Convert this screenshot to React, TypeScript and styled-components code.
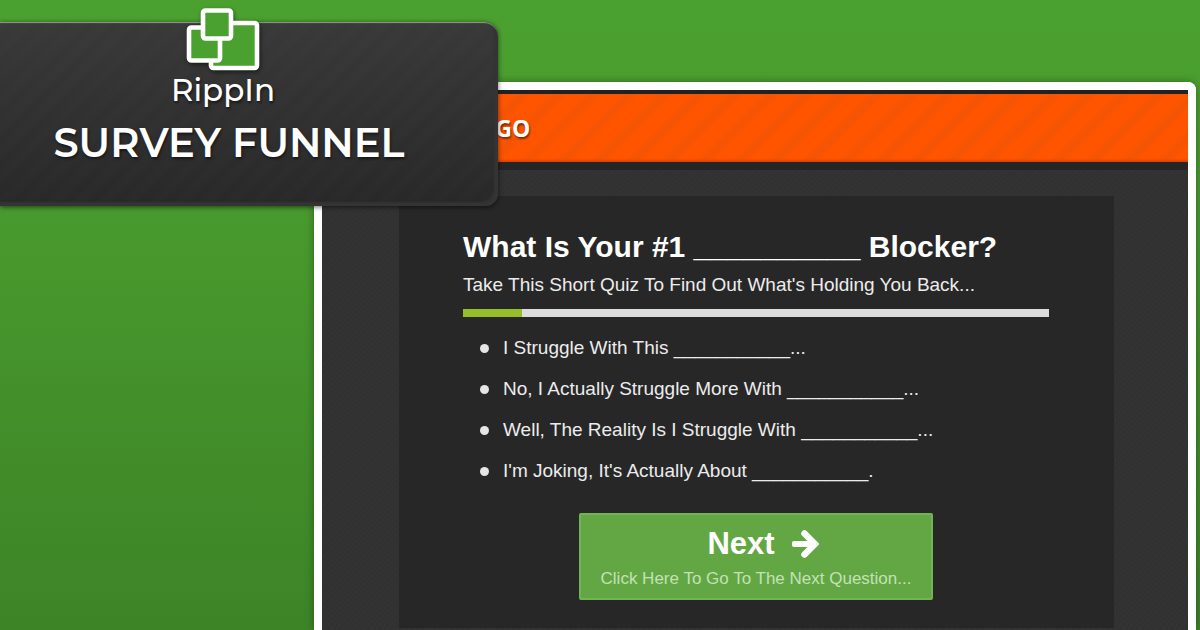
import React from "react";
import styled, { createGlobalStyle } from "styled-components";

const GlobalStyle = createGlobalStyle`
  *, *::before, *::after { box-sizing: border-box; }
  body { margin: 0; background: #3d8427; }
  h1, h2, p, ul { margin: 0; padding: 0; font-weight: inherit; }
`;

const Page = styled.main`
  position: relative;
  display: flex;
  min-height: 100vh;
  padding: 82px 4px 0 314px;
  overflow: hidden;
  background: linear-gradient(#4ba12f, #499b2e 30%, #3d8427);
  font-family: "Liberation Sans", Arial, sans-serif;
`;

const Frame = styled.section`
  flex: 1;
  display: flex;
  flex-direction: column;
  border: 8px solid #fff;
  border-bottom: 0;
  border-radius: 8px 8px 0 0;
  background: repeating-linear-gradient(135deg, #313131 0 2px, #333 2px 4px);
  box-shadow: 0 0 8px rgba(0, 0, 0, 0.35);
`;

const TopBar = styled.header`
  display: flex;
  align-items: center;
  height: 80px;
  padding-left: 142px;
  border-top: 4px solid #222;
  border-bottom: 8px solid #252525;
  background: repeating-linear-gradient(135deg, #ff5500 0 10px, #f45404 17px 19px, #ff5500 25px);
  box-shadow: inset 0 -3px 2px -1px #e24306;
`;

const SiteName = styled.a`
  color: #fff;
  font: 700 23px/32px "Open Sans", sans-serif;
  text-decoration: none;
  text-shadow: 1px 2px 2px rgba(0, 0, 0, 0.5);
`;

const Quiz = styled.form`
  display: flex;
  flex-direction: column;
  margin: 26px 74px 2px 77px;
  padding: 33px 65px 28px 64px;
  background: #272727;
  color: #ececec;
  font-size: 19px;
`;

const Question = styled.h2`
  color: #fff;
  font-size: 30px;
  font-weight: 700;
  line-height: 36px;
  white-space: nowrap;
`;

const Intro = styled.p`
  margin-top: 8px;
  line-height: 24px;
  white-space: nowrap;
`;

const Progress = styled.div`
  height: 8px;
  margin-top: 12px;
  background: #dcdcdc;
`;

const ProgressFill = styled.div`
  height: 100%;
  background: #95be28;
`;

const Answers = styled.ul`
  display: flex;
  flex-direction: column;
  gap: 17px;
  margin-top: 19px;
  padding-left: 17px;
  list-style: none;
`;

const Answer = styled.li`
  display: flex;
  align-items: center;
  gap: 14px;
  line-height: 24px;
  white-space: nowrap;

  &::before {
    content: "";
    width: 9px;
    height: 9px;
    border-radius: 50%;
    background: #e6e6e6;
  }
`;

const NextButton = styled.button`
  align-self: center;
  display: flex;
  flex-direction: column;
  align-items: center;
  margin-top: 30px;
  padding: 10px 20px 5px;
  border: 2px solid #72b455;
  border-radius: 2px;
  background: #62a744;
  font-family: inherit;
  cursor: pointer;
`;

const NextLabel = styled.span`
  display: flex;
  align-items: center;
  gap: 16px;
  margin-left: 14px;
  color: #fff;
  font-size: 31px;
  font-weight: 700;
  line-height: 38px;
`;

const NextHint = styled.span`
  margin-top: 2px;
  color: #c3e2b6;
  font-size: 17px;
  line-height: 28px;
  white-space: nowrap;
`;

const TitleCard = styled.section`
  position: absolute;
  top: 22px;
  left: 0;
  display: flex;
  flex-direction: column;
  width: 498px;
  height: 184px;
  border-radius: 0 14px 12px 0;
  background: repeating-linear-gradient(135deg, rgba(255, 255, 255, 0.008) 0 6px, transparent 10px 14px, rgba(255, 255, 255, 0.008) 18px),
    linear-gradient(#393939, #282828);
  box-shadow: inset 0 2px 1px -1px #999, inset -5px -5px 2px -1px #343434, 0 1px 5px rgba(0, 0, 0, 0.6);
  color: #fff;
  font-family: Montserrat, Inter, sans-serif;
  font-weight: 500;
  text-align: center;
`;

const Brand = styled.div`
  display: flex;
  flex-direction: column;
  align-items: center;
  width: 446px;
  margin-top: -16px;
  font-size: 31px;
  line-height: 36px;
  text-shadow: 1px 2px 3px rgba(0, 0, 0, 0.6);
`;

const BrandMark = styled.svg`
  margin-bottom: -2px;
  filter: drop-shadow(1px 2px 2px rgba(0, 0, 0, 0.5));
`;

const Title = styled.h1`
  width: 458px;
  margin-top: 9px;
  font-size: 40px;
  font-weight: 600;
  line-height: 52px;
  white-space: nowrap;
  text-shadow: 1px 2px 3px rgba(0, 0, 0, 0.5);
`;

const answers = [
  "I Struggle With This ___________...",
  "No, I Actually Struggle More With ___________...",
  "Well, The Reality Is I Struggle With ___________...",
  "I'm Joking, It's Actually About ___________.",
];

const progress = 10;

export default function App() {
  return (
    <>
      <GlobalStyle />
      <Page>
        <Frame>
          <TopBar>
            <SiteName href="#">LOGO</SiteName>
          </TopBar>
          <Quiz onSubmit={(e) => e.preventDefault()}>
            <Question>What Is Your #1 __________ Blocker?</Question>
            <Intro>Take This Short Quiz To Find Out What's Holding You Back...</Intro>
            <Progress role="progressbar" aria-label="Quiz progress" aria-valuenow={progress}>
              <ProgressFill style={{ width: `${progress}%` }} />
            </Progress>
            <Answers>
              {answers.map((text) => (
                <Answer key={text}>{text}</Answer>
              ))}
            </Answers>
            <NextButton type="submit">
              <NextLabel>
                Next
                <svg width="28" height="30" viewBox="0 0 28 30" aria-hidden="true">
                  <rect x="1" y="12" width="22" height="6" rx="2" fill="#fff" />
                  <path d="M13.5 4.5L24 15L13.5 25.5" fill="none" stroke="#fff" strokeWidth="6.5" strokeLinecap="round" />
                </svg>
              </NextLabel>
              <NextHint>Click Here To Go To The Next Question...</NextHint>
            </NextButton>
          </Quiz>
        </Frame>
        <TitleCard>
          <Brand>
            <BrandMark width="76" height="68" viewBox="0 0 76 68" fill="#4ba12f" stroke="#fff" strokeWidth="4.6" aria-hidden="true">
              <rect x="26" y="17" width="46" height="45" rx="2.5" />
              <rect x="4" y="21.5" width="31" height="33" rx="2.5" />
              <rect x="18" y="4.5" width="28" height="28" rx="2.5" />
            </BrandMark>
            RippIn
          </Brand>
          <Title>SURVEY FUNNEL</Title>
        </TitleCard>
      </Page>
    </>
  );
}
